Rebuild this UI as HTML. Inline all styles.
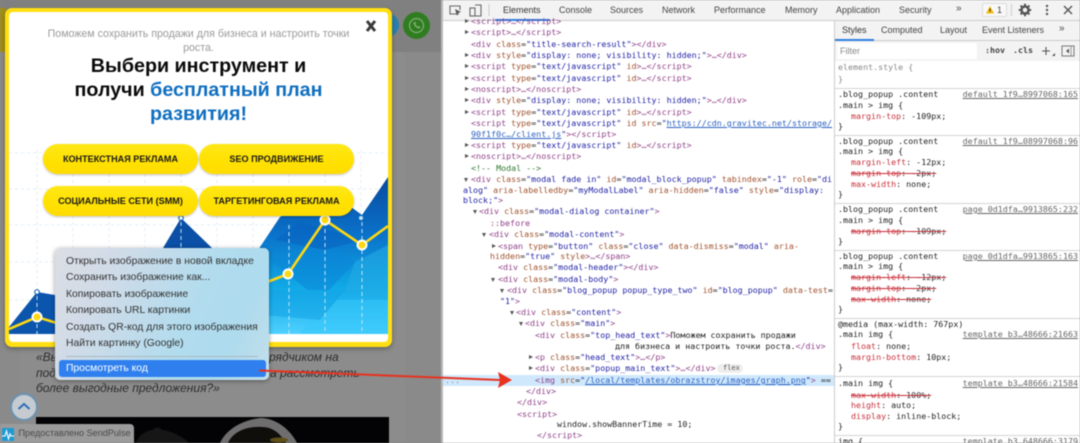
<!DOCTYPE html>
<html lang="ru">
<head>
<meta charset="utf-8">
<title>DevTools</title>
<style>
html,body{margin:0;padding:0;background:#888}
#r{position:relative;width:1080px;height:443px;overflow:hidden;background:#8a8a8a;font-family:"Liberation Sans",sans-serif;filter:blur(.45px)}
#r div,#r p,#r svg{position:absolute;margin:0}
#r .m{left:0;top:0;width:1080px;height:443px}
.m p{font:8.33px/11px "DejaVu Sans Mono","Liberation Mono",monospace;white-space:pre;color:#222}
.t{color:#8f3f88}.a{color:#a0522d}.v{color:#2222a6}.c{color:#2f7a32}.u{text-decoration:underline;color:#2a5fc0}
.r{color:#c8303a}.s{text-decoration:line-through;color:#c8303a}.s i{font-style:normal;color:#333}
.m p.lk{color:#666;text-decoration:underline;right:2px}
.tr{width:0;height:0;border-left:2.5px solid transparent;border-right:2.5px solid transparent;border-top:4px solid #555}
.tc{border-top:2.5px solid transparent;border-bottom:2.5px solid transparent;border-left:4px solid #555;border-right:0}
.tab{font-size:9px;line-height:12px;color:#444;white-space:nowrap}
.btn{height:30px;border-radius:15px;width:155px;background:linear-gradient(#ffe818,#ffe100 60%,#ffdb00);box-shadow:0 1px 2px rgba(0,0,0,.25);text-align:center;font-weight:bold;font-size:9.1px;line-height:30px;color:#1a1a1a;white-space:nowrap}
.mi{left:66px;font-size:10.35px;line-height:14px;color:#333;white-space:nowrap}
.it{font-style:italic;font-size:12px;line-height:14px;color:#2c2c2c;white-space:nowrap}
.sep{left:835px;width:245px;height:1px;background:#d4d4d4}
</style>
</head>
<body>
<div id="r">
<!-- page behind -->
<div style="left:0;top:0;width:443px;height:52px;background:#808080"></div>
<div style="left:0;top:8px;width:6px;height:44px;background:#a08f14"></div>
<div style="left:385px;top:13px;width:14px;height:24px;border-radius:0 12px 12px 0;background:#2a7fb0"></div>
<div style="left:403px;top:12px;width:27px;height:27px;border-radius:50%;background:#2f7d20"></div>
<svg style="left:403px;top:12px" width="27" height="27" viewBox="0 0 27 27"><circle cx="13.5" cy="13.5" r="7" fill="none" stroke="#7fae72" stroke-width="1.2"/><path d="M10.5 10.5c0 3 3 6 6 6l1-1.5-2-1-.8.6c-1-.5-1.8-1.3-2.2-2.2l.6-.8-1-2z" fill="#7fae72"/></svg>
<div style="left:20px;top:52px;width:385px;height:391px;background:#8c8c8c"></div>
<div style="left:36px;top:417px;width:353px;height:26px;background:#030305"></div>
<svg style="left:36px;top:417px" width="353" height="26" viewBox="0 0 353 26"><path d="M100 26c3-9 12-13 17-13 1-3 8-3 9 0 10 1 20 6 27 13z" fill="#161616"/><path d="M184 26C190 12 208 2 226 1C242 2 255 14 261 26Z" fill="#6e6e6e"/><path d="M192 26C197 15 210 9 226 10C238 10 245 18 250 26Z" fill="#0f0e0b"/><ellipse cx="243" cy="23" rx="9" ry="2.500" fill="#5e5018"/></svg>
<div class="it" style="left:36px;top:350px">«Вы</div>
<div class="it" style="left:269px;top:350px">рядчиком на</div>
<div class="it" style="left:36px;top:366px">под</div>
<div class="it" style="left:270px;top:366px">а рассмотреть</div>
<div class="it" style="left:36px;top:381px">более выгодные предложения?»</div>
<div style="left:10px;top:393px;width:24px;height:24px;border-radius:50%;background:#c5cbd0;border:2px solid #6b93b3"></div>
<svg style="left:10px;top:393px" width="28" height="28" viewBox="0 0 28 28"><path d="M8.500 16l5.500-5 5.500 5" fill="none" stroke="#2f6fb8" stroke-width="2"/></svg>
<div style="left:0;top:424px;width:134px;height:19px;background:#9b9b9b;border-radius:0 4px 0 0"></div>
<div style="left:2px;top:428px;width:12px;height:13px;background:#1e9ad2"></div>
<svg style="left:2px;top:428px" width="12" height="13" viewBox="0 0 12 13"><path d="M0 8h3l1.500-5 2 8 1.500-5 1 2h3" fill="none" stroke="#fff" stroke-width="1.100"/></svg>
<div style="left:18.500px;top:426px;font-size:9.100px;line-height:14px;color:#4a4a4a;white-space:nowrap">Предоставлено SendPulse</div>

<!-- popup -->
<div style="left:5px;top:8px;width:387px;height:339px;background:#ffdf12;border-radius:7px;box-shadow:0 2px 5px rgba(0,0,0,.3)"></div>
<div style="left:9px;top:12px;width:379px;height:330px;background:#fff;border-radius:4px;overflow:hidden"></div>
<svg style="left:0;top:0" width="1080" height="443" viewBox="0 0 1080 443">
<defs>
<clipPath id="pc"><rect x="9" y="12" width="379" height="322"/></clipPath>
<linearGradient id="bl" x1="0" y1="0" x2="0" y2="1"><stop offset="0" stop-color="#0a4a9e"/><stop offset=".35" stop-color="#0a70c8"/><stop offset=".7" stop-color="#10a8e6"/><stop offset="1" stop-color="#4fd0ff"/></linearGradient>
</defs>
<g clip-path="url(#pc)">
<g stroke="#e3eef6" stroke-width="1" stroke-dasharray="3 3" fill="none">
<path d="M9 153H388M9 189H388M9 225H388M9 262H388M9 300H388"/>
<path d="M37 150V330M73 150V330M109 150V330M145 150V330M181 150V330M217 150V330M253 150V330M289 150V330M325 150V330M361 150V330"/>
</g>
<path d="M9 327L37 292L55 295L84 334H9Z" fill="#0b55ad"/>
<path d="M163 248L181 218L212 248L220 262H155Z" fill="#0b4fa6"/>
<path d="M250 334L250 262L280 217L325 192L347 204L362 215L388 177V334Z" fill="url(#bl)"/>
<g opacity=".55">
<path d="M270 260L325 240L355 262L320 300Z" fill="#0a86d8"/>
<path d="M355 262L388 245V300L345 290Z" fill="#25aee6"/>
<path d="M320 300L388 300V334H300Z" fill="#35c8fa"/>
<path d="M270 290L345 290L320 320L262 315Z" fill="#12a4e6"/>
<path d="M300 222L362 240L325 250L275 240Z" fill="#0862c0"/>
</g>
<g stroke="#bfe3f7" stroke-width="1" stroke-dasharray="4 3" fill="none"><path d="M37 296V334M181 222V248M289 225V334M325 222V334M362 222V334"/></g>
<path d="M9 329L37 317L60 324M262 284L288 274L325 220L362 245L388 226" fill="none" stroke="#ffd811" stroke-width="2.600"/>
<g fill="#ffd811" stroke="#fff" stroke-width="2"><circle cx="37" cy="317" r="4.500"/><circle cx="288" cy="274" r="4.500"/><circle cx="325" cy="220" r="4.500"/><circle cx="362" cy="245" r="4.500"/></g>
<g fill="#fff" stroke="#1d6cb8" stroke-width="1.200"><circle cx="37" cy="292" r="2.300"/><circle cx="181" cy="218" r="2.300"/></g>
<circle cx="361" cy="218" r="2" fill="#bfe3f7"/>
</g>
<path d="M367 21L375 31M375 21L367 31" stroke="#3a3a3a" stroke-width="3" fill="none"/>
</svg>
<div style="left:9px;top:27px;width:379px;text-align:center;font-size:10.650px;line-height:14px;color:#9a9a9a;white-space:nowrap">Поможем сохранить продажи для бизнеса и настроить точки</div>
<div style="left:9px;top:41px;width:379px;text-align:center;font-size:10.650px;line-height:14px;color:#9a9a9a">роста.</div>
<div style="left:9px;top:54px;width:379px;text-align:center;font-size:19.700px;line-height:24px;font-weight:bold;color:#0a0a0a;white-space:nowrap">Выбери инструмент и</div>
<div style="left:9px;top:78px;width:379px;text-align:center;font-size:19.700px;line-height:24px;font-weight:bold;color:#0a0a0a;white-space:nowrap">получи <span style="color:#0f6fc0">бесплатный план</span></div>
<div style="left:9px;top:102px;width:379px;text-align:center;font-size:19.700px;line-height:24px;font-weight:bold;color:#0f6fc0;white-space:nowrap">развития!</div>
<div class="btn" style="left:43px;top:144px">КОНТЕКСТНАЯ РЕКЛАМА</div>
<div class="btn" style="left:199px;top:144px">SEO ПРОДВИЖЕНИЕ</div>
<div class="btn" style="left:43px;top:186px">СОЦИАЛЬНЫЕ СЕТИ (SMM)</div>
<div class="btn" style="left:199px;top:186px">ТАРГЕТИНГОВАЯ РЕКЛАМА</div>

<!-- context menu -->
<div style="left:55px;top:248px;width:214px;height:132px;border-radius:5px;background:linear-gradient(115deg,#dcdee4 0%,#cfdbe8 25%,#b2dcee 60%,#aedbee 80%,#c4dfea 100%);box-shadow:0 1px 5px rgba(0,0,0,.4)"></div>
<div class="mi" style="top:254.500px">Открыть изображение в новой вкладке</div>
<div class="mi" style="top:271px">Сохранить изображение как...</div>
<div class="mi" style="top:287.500px">Копировать изображение</div>
<div class="mi" style="top:304px">Копировать URL картинки</div>
<div class="mi" style="top:320.500px">Создать QR-код для этого изображения</div>
<div class="mi" style="top:337px">Найти картинку (Google)</div>
<div style="left:66px;top:356px;width:192px;height:1px;background:#aab8c2"></div>
<div style="left:59px;top:360px;width:207px;height:17px;background:#2f80ee;border-radius:3px"></div>
<div class="mi" style="top:362px;color:#fff">Просмотреть код</div>

<!-- devtools -->
<div style="left:441px;top:0;width:639px;height:443px;background:#fff"></div>
<div style="left:441px;top:0;width:2px;height:443px;background:#b8b8b8"></div>
<div style="left:443px;top:0;width:637px;height:20px;background:#f3f3f3;border-bottom:1px solid #ccc"></div>
<div style="left:495px;top:19px;width:55px;height:2px;background:#2c7fe0"></div>
<svg style="left:443px;top:0" width="60" height="20" viewBox="0 0 60 20"><path d="M16 14H7V6H17V10" fill="none" stroke="#666" stroke-width="1.100"/><path d="M12 9L18 12L15 13L14 16Z" fill="#555"/><rect x="27" y="8" width="5" height="8" fill="none" stroke="#666" stroke-width="1.100"/><path d="M32 5H38V16H32" fill="none" stroke="#666" stroke-width="1.100"/><path d="M46 4V16" stroke="#ccc"/></svg>
<div class="tab" style="left:503px;top:4px;color:#333">Elements</div>
<div class="tab" style="left:559px;top:4px">Console</div>
<div class="tab" style="left:610px;top:4px">Sources</div>
<div class="tab" style="left:662px;top:4px">Network</div>
<div class="tab" style="left:714px;top:4px">Performance</div>
<div class="tab" style="left:785px;top:4px">Memory</div>
<div class="tab" style="left:836px;top:4px">Application</div>
<div class="tab" style="left:899px;top:4px">Security</div>
<div class="tab" style="left:956px;top:3px;font-size:10px">»</div>
<div style="left:982px;top:3px;width:23px;height:12px;border:1px solid #ddd;background:#f8f8f8;border-radius:2px"></div>
<svg style="left:985px;top:5px" width="10" height="10" viewBox="0 0 10 10"><path d="M5 1L9 8.500H1Z" fill="#f2b705"/><path d="M5 3.500V6.500" stroke="#333"/></svg>
<div class="tab" style="left:997px;top:4px">1</div>
<div style="left:1011px;top:4px;width:1px;height:12px;background:#ccc"></div>
<svg style="left:1018px;top:3px" width="14" height="14" viewBox="0 0 14 14"><circle cx="7" cy="7" r="3.500" fill="none" stroke="#555" stroke-width="2.500"/><path d="M7 .8V3M7 11V13.200M.8 7H3M11 7H13.200M2.600 2.600L4 4M10 10L11.400 11.400M2.600 11.400L4 10M10 4L11.400 2.600" stroke="#555" stroke-width="2"/></svg>
<svg style="left:1044px;top:3px" width="6" height="14" viewBox="0 0 6 14"><circle cx="3" cy="3" r="1.200" fill="#555"/><circle cx="3" cy="7" r="1.200" fill="#555"/><circle cx="3" cy="11" r="1.200" fill="#555"/></svg>
<svg style="left:1062px;top:4px" width="12" height="12" viewBox="0 0 12 12"><path d="M2 2L10 10M10 2L2 10" stroke="#555" stroke-width="1.400"/></svg>

<!-- styles pane header -->
<div style="left:834px;top:21px;width:1px;height:422px;background:#ccc"></div>
<div style="left:835px;top:21px;width:245px;height:40px;background:#f3f3f3"></div>
<div style="left:835px;top:40px;width:245px;height:1px;background:#ccc"></div>
<div style="left:835px;top:39px;width:39px;height:2px;background:#2c7fe0"></div>
<div class="tab" style="left:842px;top:24px;color:#333">Styles</div>
<div class="tab" style="left:881px;top:24px">Computed</div>
<div class="tab" style="left:940px;top:24px">Layout</div>
<div class="tab" style="left:982px;top:24px">Event Listeners</div>
<div class="tab" style="left:1059px;top:23px;font-size:10px">»</div>
<div style="left:837px;top:43px;width:140px;height:16px;background:#fff"></div>
<div class="tab" style="left:840px;top:45px;color:#888">Filter</div>
<div class="m"><p style="left:985px;top:45px;font-weight:bold;color:#444">:hov</p><p style="left:1013px;top:45px;font-weight:bold;color:#444">.cls</p></div>
<svg style="left:1040px;top:43px" width="36" height="16" viewBox="0 0 36 16"><path d="M2 8H10M6 4V12" stroke="#555" stroke-width="1.100"/><path d="M15 13H12L15 10Z" fill="#555"/><rect x="22" y="3" width="12" height="10" fill="none" stroke="#777"/><path d="M29 5.500L26 8L29 10.500Z" fill="#555"/><path d="M31 3V13" stroke="#999"/></svg>

<div style="top:88px" class="sep"></div>
<div style="top:135px" class="sep"></div>
<div style="top:203px" class="sep"></div>
<div style="top:250px" class="sep"></div>
<div style="top:318px" class="sep"></div>
<div style="top:376px" class="sep"></div>
<div style="top:435px" class="sep"></div>

<!-- highlighted row -->
<div style="left:443px;top:375px;width:391px;height:11px;background:#cfe8fc"></div>

<div class="m">
<p style="left:838px;top:62px;color:#888">element.style {</p>
<p style="left:838px;top:74px;color:#888">}</p>

<p style="left:838px;top:89px">.blog_popup .content</p><p class="lk" style="top:89px">default_1f9…8997068:165</p>
<p style="left:838px;top:100px">.main &gt; img {</p>
<p style="left:851px;top:111px"><span class="r">margin-top</span>: -109px;</p>
<p style="left:838px;top:121px">}</p>

<p style="left:838px;top:136px">.blog_popup .content</p><p class="lk" style="top:136px">default_1f9…08997068:96</p>
<p style="left:838px;top:146px">.main &gt; img {</p>
<p style="left:851px;top:157px"><span class="r">margin-left</span>: -12px;</p>
<p style="left:851px;top:168px"><span class="s">margin-top<i>: -2px;</i></span></p>
<p style="left:851px;top:179px"><span class="r">max-width</span>: none;</p>
<p style="left:838px;top:189px">}</p>

<p style="left:838px;top:204px">.blog_popup .content</p><p class="lk" style="top:204px">page_0d1dfa…9913865:232</p>
<p style="left:838px;top:215px">.main &gt; img {</p>
<p style="left:851px;top:226px"><span class="s">margin-top<i>: -109px;</i></span></p>
<p style="left:838px;top:236px">}</p>

<p style="left:838px;top:251px">.blog_popup .content</p><p class="lk" style="top:251px">page_0d1dfa…9913865:163</p>
<p style="left:838px;top:261px">.main &gt; img {</p>
<p style="left:851px;top:272px"><span class="s">margin-left<i>: -12px;</i></span></p>
<p style="left:851px;top:283px"><span class="s">margin-top<i>: -2px;</i></span></p>
<p style="left:851px;top:294px"><span class="s">max-width<i>: none;</i></span></p>
<p style="left:838px;top:304px">}</p>

<p style="left:838px;top:319px">@media (max-width: 767px)</p>
<p style="left:838px;top:329px">.main img {</p><p class="lk" style="top:329px">template_b3…48666:21663</p>
<p style="left:851px;top:341px"><span class="r">float</span>: none;</p>
<p style="left:851px;top:352px"><span class="r">margin-bottom</span>: 10px;</p>
<p style="left:838px;top:362px">}</p>

<p style="left:838px;top:378px">.main img {</p><p class="lk" style="top:378px">template_b3…48666:21584</p>
<p style="left:851px;top:390px"><span class="s">max-width<i>: 100%;</i></span></p>
<p style="left:851px;top:400px"><span class="r">height</span>: auto;</p>
<p style="left:851px;top:411px"><span class="r">display</span>: inline-block;</p>
<p style="left:838px;top:421px">}</p>
<p style="left:838px;top:436px">img {</p><p class="lk" style="top:436px">template_b3…648666:3179</p>

<!-- DOM -->
<p style="left:471px;top:16px"><span class="t">&lt;script&gt;…&lt;/script&gt;</span></p>
<p style="left:471px;top:27px"><span class="t">&lt;script&gt;…&lt;/script&gt;</span></p>
<p style="left:471px;top:39px"><span class="t">&lt;div</span> <span class="a">class</span>=<span class="v">"title-search-result"</span><span class="t">&gt;&lt;/div&gt;</span></p>
<p style="left:471px;top:50px"><span class="t">&lt;div</span> <span class="a">style</span>=<span class="v">"display: none; visibility: hidden;"</span><span class="t">&gt;…&lt;/div&gt;</span></p>
<p style="left:471px;top:61px"><span class="t">&lt;script</span> <span class="a">type</span>=<span class="v">"text/javascript"</span> <span class="a">id</span><span class="t">&gt;…&lt;/script&gt;</span></p>
<p style="left:471px;top:73px"><span class="t">&lt;script</span> <span class="a">type</span>=<span class="v">"text/javascript"</span> <span class="a">id</span><span class="t">&gt;…&lt;/script&gt;</span></p>
<p style="left:471px;top:84px"><span class="t">&lt;noscript&gt;…&lt;/noscript&gt;</span></p>
<p style="left:471px;top:95px"><span class="t">&lt;div</span> <span class="a">style</span>=<span class="v">"display: none; visibility: hidden;"</span><span class="t">&gt;…&lt;/div&gt;</span></p>
<p style="left:471px;top:107px"><span class="t">&lt;script</span> <span class="a">type</span>=<span class="v">"text/javascript"</span> <span class="a">id</span><span class="t">&gt;…&lt;/script&gt;</span></p>
<p style="left:471px;top:118px"><span class="t">&lt;script</span> <span class="a">type</span>=<span class="v">"text/javascript"</span> <span class="a">id src</span>=<span class="v">"</span><span class="u">https://cdn.gravitec.net/storage/</span></p>
<p style="left:471px;top:129px"><span class="u">90f1f0c…/client.js</span><span class="v">"</span><span class="t">&gt;&lt;/script&gt;</span></p>
<p style="left:471px;top:140px"><span class="t">&lt;script</span> <span class="a">type</span>=<span class="v">"text/javascript"</span> <span class="a">id</span><span class="t">&gt;…&lt;/script&gt;</span></p>
<p style="left:471px;top:151px"><span class="t">&lt;noscript&gt;…&lt;/noscript&gt;</span></p>
<p style="left:471px;top:163px"><span class="c">&lt;!-- Modal --&gt;</span></p>
<p style="left:471px;top:174px"><span class="t">&lt;div</span> <span class="a">class</span>=<span class="v">"modal fade in"</span> <span class="a">id</span>=<span class="v">"modal_block_popup"</span> <span class="a">tabindex</span>=<span class="v">"-1"</span> <span class="a">role</span>=<span class="v">"di</span></p>
<p style="left:463px;top:185px"><span class="v">alog"</span> <span class="a">aria-labelledby</span>=<span class="v">"myModalLabel"</span> <span class="a">aria-hidden</span>=<span class="v">"false"</span> <span class="a">style</span>=<span class="v">"display:</span></p>
<p style="left:463px;top:195px"><span class="v">block;"</span><span class="t">&gt;</span></p>
<p style="left:479px;top:206px"><span class="t">&lt;div</span> <span class="a">class</span>=<span class="v">"modal-dialog container"</span><span class="t">&gt;</span></p>
<p style="left:490px;top:218px"><span class="t">::before</span></p>
<p style="left:489px;top:229px"><span class="t">&lt;div</span> <span class="a">class</span>=<span class="v">"modal-content"</span><span class="t">&gt;</span></p>
<p style="left:498px;top:241px"><span class="t">&lt;span</span> <span class="a">type</span>=<span class="v">"button"</span> <span class="a">class</span>=<span class="v">"close"</span> <span class="a">data-dismiss</span>=<span class="v">"modal"</span> <span class="a">aria-</span></p>
<p style="left:490px;top:251px"><span class="a">hidden</span>=<span class="v">"true"</span> <span class="a">style</span><span class="t">&gt;…&lt;/span&gt;</span></p>
<p style="left:498px;top:262px"><span class="t">&lt;div</span> <span class="a">class</span>=<span class="v">"modal-header"</span><span class="t">&gt;&lt;/div&gt;</span></p>
<p style="left:498px;top:274px"><span class="t">&lt;div</span> <span class="a">class</span>=<span class="v">"modal-body"</span><span class="t">&gt;</span></p>
<p style="left:507px;top:285px"><span class="t">&lt;div</span> <span class="a">class</span>=<span class="v">"blog_popup popup_type_two"</span> <span class="a">id</span>=<span class="v">"blog_popup"</span> <span class="a">data-test</span>=</p>
<p style="left:500px;top:296px"><span class="v">"1"</span><span class="t">&gt;</span></p>
<p style="left:516px;top:307px"><span class="t">&lt;div</span> <span class="a">class</span>=<span class="v">"content"</span><span class="t">&gt;</span></p>
<p style="left:525px;top:318px"><span class="t">&lt;div</span> <span class="a">class</span>=<span class="v">"main"</span><span class="t">&gt;</span></p>
<p style="left:535px;top:330px"><span class="t">&lt;div</span> <span class="a">class</span>=<span class="v">"top_head_text"</span><span class="t">&gt;</span>Поможем сохранить продажи</p>
<p style="left:615px;top:341px">для бизнеса и настроить точки роста.<span class="t">&lt;/div&gt;</span></p>
<p style="left:535px;top:352px"><span class="t">&lt;p</span> <span class="a">class</span>=<span class="v">"head_text"</span><span class="t">&gt;…&lt;/p&gt;</span></p>
<p style="left:535px;top:363px"><span class="t">&lt;div</span> <span class="a">class</span>=<span class="v">"popup_main_text"</span><span class="t">&gt;…&lt;/div&gt;</span></p>
<p style="left:535px;top:375px"><span class="t">&lt;img</span> <span class="a">src</span>=<span class="v">"</span><span class="u">/local/templates/obrazstroy/images/graph.png</span><span class="v">"</span><span class="t">&gt;</span> == </p>
<p style="left:445px;top:375px;color:#888">...</p>
<p style="left:526px;top:386px"><span class="t">&lt;/div&gt;</span></p>
<p style="left:517px;top:397px"><span class="t">&lt;/div&gt;</span></p>
<p style="left:517px;top:409px"><span class="t">&lt;script&gt;</span></p>
<p style="left:557px;top:419px">window.showBannerTime = 10;</p>
<p style="left:537px;top:430px"><span class="t">&lt;/script&gt;</span></p>
</div>
<div style="left:717px;top:364px;width:26px;height:9px;background:#eee;border-radius:5px"></div>
<div class="m"><p style="left:723px;top:363px;font-size:7px;color:#555">flex</p></div>

<!-- DOM triangles -->
<div class="tr tc" style="left:465px;top:19px"></div>
<div class="tr tc" style="left:465px;top:30px"></div>
<div class="tr tc" style="left:465px;top:53px"></div>
<div class="tr tc" style="left:465px;top:64px"></div>
<div class="tr tc" style="left:465px;top:76px"></div>
<div class="tr tc" style="left:465px;top:87px"></div>
<div class="tr tc" style="left:465px;top:98px"></div>
<div class="tr tc" style="left:465px;top:110px"></div>
<div class="tr tc" style="left:465px;top:143px"></div>
<div class="tr tc" style="left:465px;top:154px"></div>
<div class="tr" style="left:464px;top:178px"></div>
<div class="tr" style="left:473px;top:210px"></div>
<div class="tr" style="left:482px;top:233px"></div>
<div class="tr tc" style="left:492px;top:244px"></div>
<div class="tr" style="left:491px;top:278px"></div>
<div class="tr" style="left:500px;top:289px"></div>
<div class="tr" style="left:510px;top:311px"></div>
<div class="tr" style="left:519px;top:322px"></div>
<div class="tr tc" style="left:529px;top:355px"></div>
<div class="tr tc" style="left:529px;top:366px"></div>

<!-- red arrow -->
<svg style="left:0;top:0" width="1080" height="443" viewBox="0 0 1080 443"><path d="M259 370.500L500 380" stroke="#e8321f" stroke-width="2" fill="none"/><path d="M498 372L512 380L498 388L500 380Z" fill="#e8321f"/></svg>
</div>
</body>
</html>
